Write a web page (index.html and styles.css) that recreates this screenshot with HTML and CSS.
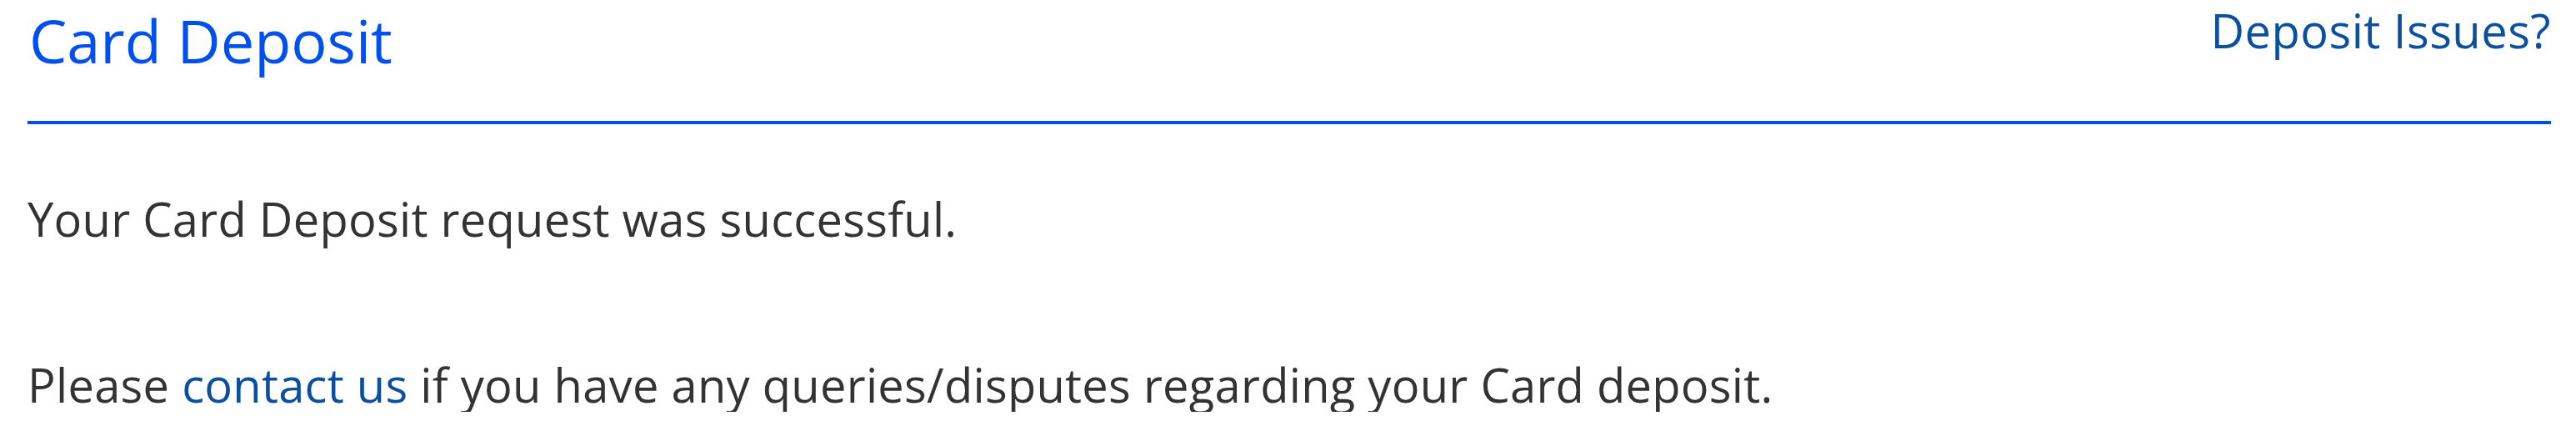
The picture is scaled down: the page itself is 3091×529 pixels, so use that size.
FILE: index.html
```html
<!DOCTYPE html>
<html lang="en">
<head>
    <meta charset="UTF-8">
    <title>Card Deposit</title>
    <link rel="stylesheet" href="styles.css">
</head>
<body>
    <div class="deposit-container">
        <div class="deposit-header">
            <h1>Card Deposit</h1>
            <a href="#" class="issues-link">Deposit Issues?</a>
        </div>
        <div class="deposit-body">
            <p>Your Card Deposit request was successful.</p>
            <p>Please <a href="#">contact us</a> if you have any queries/disputes regarding your Card deposit.</p>
        </div>
    </div>
</body>
</html>
```

FILE: styles.css
```css
body {
    font-family: "Open Sans", Lato, sans-serif;
    margin: 0;
    padding: 0;
    background-color: #fff;
    color: #333;
}

.deposit-container {
    margin: 0 30px 0 33px;
}

.deposit-header {
    display: flex;
    justify-content: space-between;
    align-items: flex-start;
    border-bottom: 4px solid #0050f0;
    height: 145px;
}

h1 {
    margin: 0;
    padding-top: 6px;
    padding-left: 2px;
    font-size: 72px;
    font-weight: 400;
    line-height: 84px;
    color: #0050f0;
}

.issues-link {
    padding-top: 4px;
    font-size: 56px;
    line-height: 64px;
    color: #0a4fa0;
    text-decoration: none;
    letter-spacing: 0.5px;
}

.deposit-body p {
    margin: 0;
    font-size: 56px;
    line-height: 66px;
    letter-spacing: 0.3px;
}

.deposit-body p:first-child {
    margin-top: 80px;
}

.deposit-body p + p {
    margin-top: 133px;
}

.deposit-body a {
    color: #0a4fa0;
    text-decoration: none;
}
```
